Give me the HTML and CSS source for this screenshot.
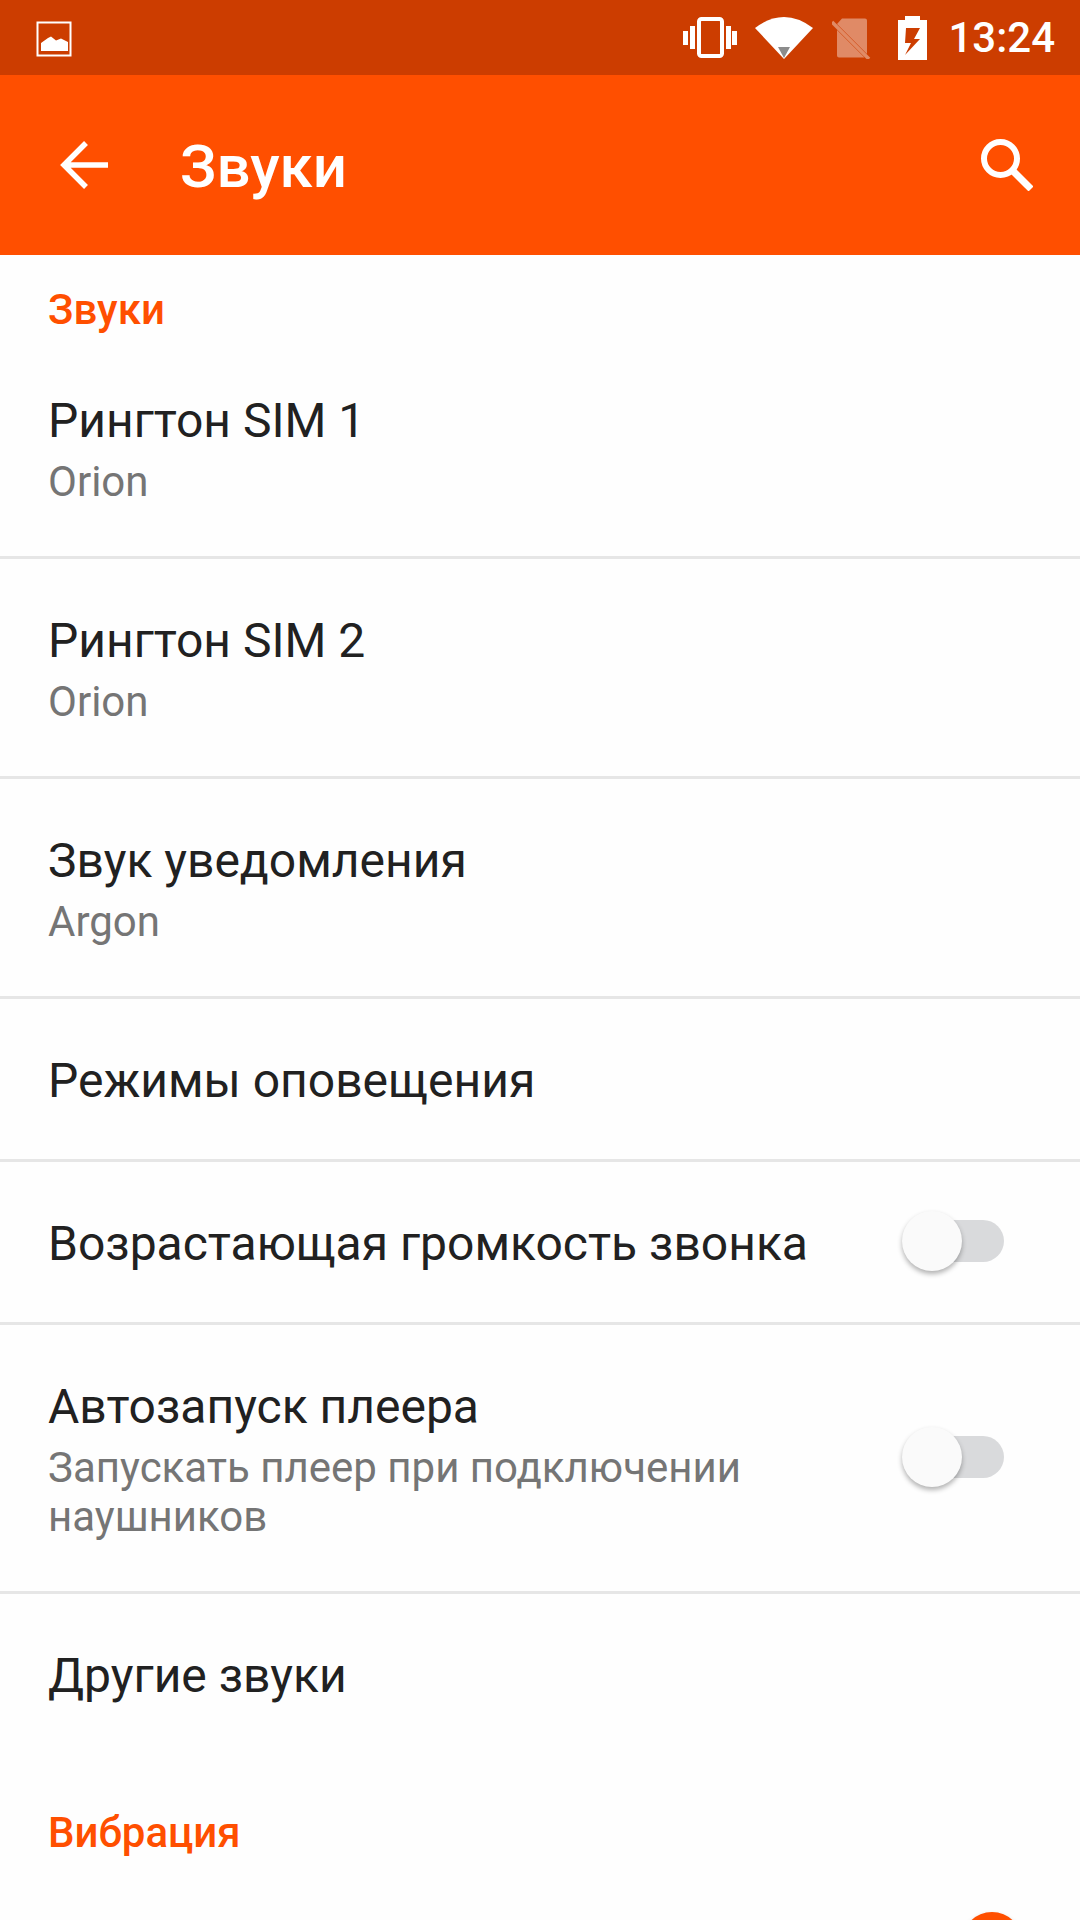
FILE: index.html
```html
<!DOCTYPE html>
<html lang="ru">
<head>
    <meta charset="UTF-8">
    <meta name="viewport" content="width=device-width, initial-scale=1.0">
    <title>Звуки</title>
    <link rel="stylesheet" href="styles.css">
</head>
<body>
    <div class="status-bar">
        <svg class="pic-icon" width="36" height="36" viewBox="0 0 36 36">
            <rect x="1.500" y="1.500" width="33" height="33" fill="none" stroke="#fff" stroke-width="2"/>
            <path d="M5 30V22L12 17L15 15.500L20 19.500L25 17.500L32 21V30Z" fill="#fff"/>
        </svg>
        <div class="status-right">
            <svg class="st-vibrate" width="54" height="41" viewBox="0 0 54 41">
                <rect x="16" y="2" width="23" height="37" rx="2.500" fill="none" stroke="#fff" stroke-width="4"/>
                <path d="M0 14H5V28H0ZM7 9H12V32H7ZM43 9H48V32H43ZM49 14H54V28H49Z" fill="#fff"/>
            </svg>
            <svg class="st-wifi" width="58" height="42" viewBox="0 0 58 42">
                <path d="M0 11Q29 -11 58 11L29 42Z" fill="#fff"/>
                <path d="M23 30H35L29 41Z" fill="#8c8c8c"/>
            </svg>
            <svg class="st-sim" width="40" height="42" viewBox="0 0 40 42">
                <path d="M10 1.500H33Q35 1.500 35 3.500V37L5 7ZM5 13V38.500Q5 40.500 7 40.500H32.500Z" fill="#fff" opacity=".4"/>
                <path d="M0 5L37 42" stroke="#e08b66" stroke-width="3.500"/>
            </svg>
            <svg class="st-battery" width="29" height="44" viewBox="0 0 29 44">
                <path d="M7 0H22V4H29V44H0V4H7Z" fill="#fff"/>
                <path d="M8 12H22L16 23H22L7 39L13 27H7Z" fill="#cc3d00"/>
            </svg>
            <span class="clock">13:24</span>
        </div>
    </div>

    <div class="toolbar">
        <svg class="back-icon" width="48" height="48" viewBox="0 0 48 48">
            <path d="M48 24H4M26 2L4 24L26 46" fill="none" stroke="#fff" stroke-width="5.500"/>
        </svg>
        <h1 class="toolbar-title">Звуки</h1>
        <svg class="search-icon" width="52" height="52" viewBox="0 0 52 52">
            <circle cx="19.500" cy="19.500" r="16.500" fill="none" stroke="#fff" stroke-width="6"/>
            <path d="M31 31L50 50" stroke="#fff" stroke-width="7"/>
        </svg>
    </div>

    <div class="settings">
        <div class="category">Звуки</div>
        <div class="row two-line">
            <div class="row-text">
                <div class="row-title">Рингтон SIM 1</div>
                <div class="row-sub">Orion</div>
            </div>
        </div>
        <div class="row two-line">
            <div class="row-text">
                <div class="row-title">Рингтон SIM 2</div>
                <div class="row-sub">Orion</div>
            </div>
        </div>
        <div class="row two-line">
            <div class="row-text">
                <div class="row-title">Звук уведомления</div>
                <div class="row-sub">Argon</div>
            </div>
        </div>
        <div class="row single">
            <div class="row-text">
                <div class="row-title">Режимы оповещения</div>
            </div>
        </div>
        <div class="row single">
            <div class="row-text">
                <div class="row-title">Возрастающая громкость звонка</div>
            </div>
            <div class="switch"><span class="thumb"></span></div>
        </div>
        <div class="row two-line">
            <div class="row-text">
                <div class="row-title">Автозапуск плеера</div>
                <div class="row-sub">Запускать плеер при подключении наушников</div>
            </div>
            <div class="switch"><span class="thumb"></span></div>
        </div>
        <div class="row last">
            <div class="row-text">
                <div class="row-title">Другие звуки</div>
            </div>
        </div>
        <div class="category second">Вибрация</div>
        <div class="row last top-switch">
            <div class="row-text"></div>
            <div class="switch on"><span class="thumb"></span></div>
        </div>
    </div>
</body>
</html>
```

FILE: styles.css
```css
html, body { margin: 0; height: 1920px; overflow: hidden; }
body { font-family: Roboto, "Noto Sans", sans-serif; background: #fefefe; color: #212121; }

.status-bar { height: 75px; background: #cc3d00; display: flex; align-items: center; justify-content: space-between; padding: 0 25px 0 36px; box-sizing: border-box; }
.status-right { display: flex; align-items: center; }
.status-bar svg { display: block; flex: none; }
.pic-icon { margin-top: 2px; }
.st-vibrate { margin-right: 18px; }
.st-wifi { margin-right: 19px; }
.st-sim { margin-right: 26px; }
.st-battery { margin-right: 21px; }
.clock { color: #fff; font-size: 42px; font-weight: 500; line-height: 75px; }

.toolbar { height: 180px; background: #ff4f00; display: flex; align-items: center; padding: 0 47px 0 60px; box-sizing: border-box; }
.toolbar svg { flex: none; display: block; }
.toolbar-title { margin: 4px 0 0 72px; flex: 1; color: #fff; font-size: 60px; font-weight: 500; line-height: 70px; }

.category { height: 84px; padding: 29px 48px 0; box-sizing: border-box; color: #ff4f00; font-size: 42px; font-weight: 500; line-height: 52px; }
.category.second { height: 153px; padding-top: 50px; }

.row { min-height: 163px; padding: 0 76px 0 48px; box-sizing: border-box; display: flex; align-items: center; border-bottom: 3px solid #e6e6e6; }
.row.two-line { padding-top: 52px; padding-bottom: 50px; }
.row.two-line .switch { margin-bottom: 4px; }
.row.single .row-text { padding-top: 4px; }
.row.last { border-bottom: none; }
.row.top-switch { align-items: flex-start; }
.row.top-switch .switch { margin-top: 11px; }
.row-text { flex: 1; min-width: 0; }
.row-title { font-size: 48px; line-height: 60px; }
.row-sub { margin-top: 6px; font-size: 42px; line-height: 49px; color: #757575; }

.switch { position: relative; flex: none; width: 84px; height: 42px; margin: 0 0 2px 78px; border-radius: 21px; background: #d9dadc; }
.thumb { position: absolute; left: -18px; top: -9px; width: 60px; height: 60px; border-radius: 50%; background: #fafafa; box-shadow: 0 3px 5px rgba(0, 0, 0, .3); }
.switch.on { background: #ffb999; }
.switch.on .thumb { left: 42px; background: #ff4f00; }
```
